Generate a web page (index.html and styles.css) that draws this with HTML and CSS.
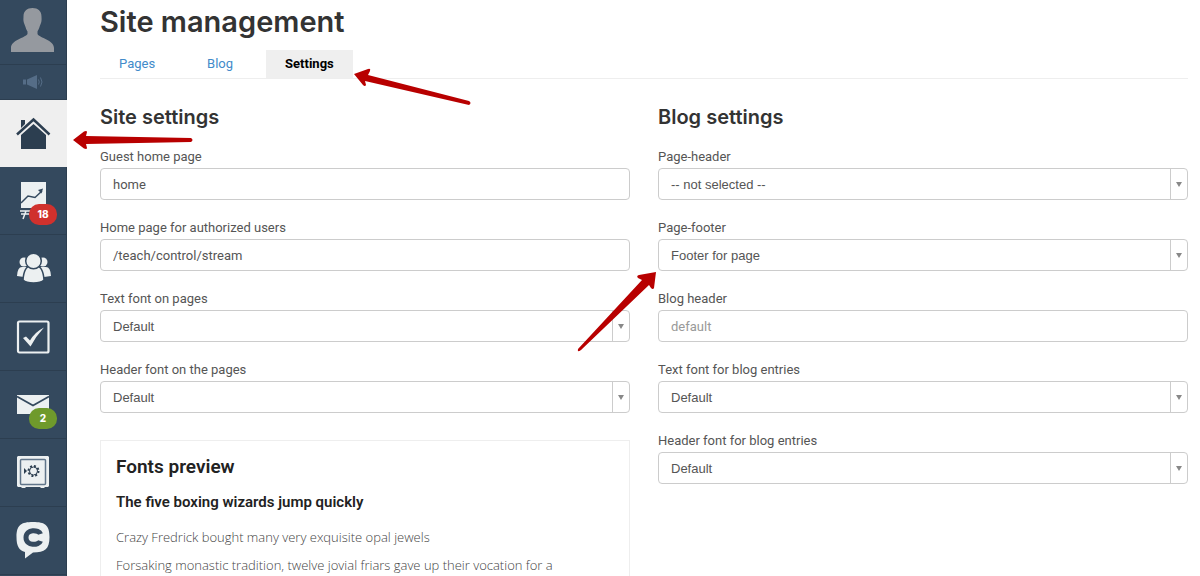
FILE: index.html
```
<!DOCTYPE html>
<html lang="en">
<head>
    <meta charset="UTF-8">
    <meta name="viewport" content="width=device-width, initial-scale=1.0">
    <title>Site management</title>
    <link rel="stylesheet" href="styles.css">
</head>
<body>
    <div class="layout">
        <nav class="sidebar" aria-label="Main menu">
            <a href="#" class="nav-item profile" aria-label="Profile">
                <svg width="46" height="46" viewBox="0 0 46 46">
                    <path fill="#95999f" d="M22.500 1C28 1 31.500 4 31.500 9.500c0 2 .3 3-.2 5.500-.4 2-1.300 3-1.800 5-.4 2-1.500 3-2 4.500v2.500c2 4 16.500 6 16.500 14v4H1v-4c0-8 14-10 16.500-14v-2.500c-.8-1.500-1.500-2.500-2-4.500-.5-2-1.400-3-1.800-5-.5-2.500-.2-3.500-.2-5.500C13.500 4 17 1 22.500 1z"/>
                </svg>
            </a>
            <a href="#" class="nav-item news" aria-label="News">
                <svg width="22" height="16" viewBox="0 0 22 16">
                    <path fill="#556d87" d="M1 5.500h3v5H1zM5 5.500l10-4.500v14L5 10.500z"/>
                    <path fill="none" stroke="#556d87" d="M16.500 5.500q1.500 2.500 0 5M18.500 3.500q3 4.500 0 9"/>
                </svg>
            </a>
            <a href="#" class="nav-item active" aria-label="Site">
                <svg width="36" height="36" viewBox="0 0 36 36">
                    <path fill="#2c3e50" d="M6 20 18.500 9 31 20v14H6zM6 5h4v4l-4 4z"/>
                    <path fill="none" stroke="#2c3e50" stroke-width="2.500" d="M2 19.500 18.500 4.500l16 15"/>
                </svg>
                <svg class="arrow arrow-site" width="122" height="20" viewBox="0 0 122 20">
                    <path d="M1 10 12 1.500q3-1 3 .500l-1 4L119 8q3 2 0 4L14 14l1 4q0 1.500-3 .500z"/>
                </svg>
            </a>
            <a href="#" class="nav-item" aria-label="Training">
                <svg width="36" height="40" viewBox="0 0 36 40">
                    <path fill="#ecf0f1" d="M6 1h25v26H6z"/>
                    <path fill="none" stroke="#34495e" stroke-width="1.500" d="M6 22 13 15l7 1.500 7-6.500"/>
                    <path fill="#34495e" d="m23 9 5-1.500-1.500 5z"/>
                    <path fill="none" stroke="#ecf0f1" stroke-width="1.500" d="M5 30h14M6 33h8M11 30 8 38"/>
                </svg>
                <span class="badge badge-red">18</span>
            </a>
            <a href="#" class="nav-item" aria-label="Users">
                <svg width="36" height="32" viewBox="0 0 36 32">
                    <g fill="#ecf0f1">
                        <circle cx="9" cy="9" r="4.500"/>
                        <circle cx="28" cy="9" r="4.500"/>
                        <path d="M2 23q.5-9 5-9h6v10H9zM36 23q-.5-9-5-9h-6v10h4z"/>
                    </g>
                    <g fill="#ecf0f1" stroke="#34495e" stroke-width="1.500">
                        <path d="M8 27q1-14 8-14h5q7 0 8 14-3 3-10.500 3T8 27z"/>
                        <circle cx="18.500" cy="8" r="7.800"/>
                    </g>
                </svg>
            </a>
            <a href="#" class="nav-item" aria-label="Tasks">
                <svg width="34" height="34" viewBox="0 0 34 34">
                    <rect x="2" y="1.500" width="30.500" height="31" rx="1.500" fill="none" stroke="#ecf0f1" stroke-width="2.200"/>
                    <path fill="#ecf0f1" d="m7 18 3-1.500 4 4Q19 12 28 7.500 20 16 14.500 26.500z"/>
                </svg>
            </a>
            <a href="#" class="nav-item" aria-label="Messages">
                <svg width="34" height="20" viewBox="0 0 34 20">
                    <path fill="#ecf0f1" d="M1 0h32v19H1z"/>
                    <path fill="none" stroke="#34495e" stroke-width="1.800" d="M1 1.500 17 10.500 33 1.500"/>
                </svg>
                <span class="badge badge-green">2</span>
            </a>
            <a href="#" class="nav-item" aria-label="Sales">
                <svg width="34" height="34" viewBox="0 0 34 34">
                    <path fill="#ecf0f1" d="M2 0h30l1 1v29l-1 1h-3l-1 1h-3l-1-1H10l-1 1H6l-1-1H2l-1-1V1z"/>
                    <rect x="4.500" y="3.500" width="25" height="25" rx="1" fill="none" stroke="#60758a" stroke-width="1.500"/>
                    <path fill="#2c3e50" d="m8 12 3 3-3 3z"/>
                    <circle cx="17.500" cy="15" r="4" fill="none" stroke="#2c3e50"/>
                    <circle cx="17.500" cy="15" r="5" fill="none" stroke="#2c3e50" stroke-width="2" stroke-dasharray="2 1.900"/>
                </svg>
            </a>
            <a href="#" class="nav-item" aria-label="Chat">
                <svg width="34" height="38" viewBox="0 0 34 38">
                    <path fill="#ecf0f1" d="M17 0C29 0 33.500 3 33.500 15S29 30.500 17 30.500L9 36.500V30C3 28.500 .5 24 .5 15 .5 3 5 0 17 0z"/>
                    <path fill="none" stroke="#34495e" stroke-width="5" d="M24.500 12C23 7.500 10 6.500 10 15.500s13 8 14.500 3.500"/>
                </svg>
            </a>
            <a href="#" class="nav-item" aria-label="More"></a>
        </nav>

        <main class="content">
            <h1>Site management</h1>
            <nav class="tabs" aria-label="Sections">
                <a href="#">Pages</a>
                <a href="#">Blog</a>
                <a href="#" class="current">Settings
                    <svg class="arrow arrow-tab" width="120" height="38" viewBox="0 0 120 38">
                        <path d="M1 6 15 1q3-1 2 2l-2 4L116 33q3 2 0 4L12 13l1 4q-1 2-3 0z"/>
                    </svg>
                </a>
            </nav>

            <form class="columns">
                <section>
                    <h2>Site settings</h2>
                    <div class="field">
                        <label for="guestPage">Guest home page</label>
                        <input type="text" id="guestPage" value="home">
                    </div>
                    <div class="field">
                        <label for="userPage">Home page for authorized users</label>
                        <input type="text" id="userPage" value="/teach/control/stream">
                    </div>
                    <div class="field">
                        <label for="textFont">Text font on pages</label>
                        <div class="select">
                            <select id="textFont"><option>Default</option></select>
                        </div>
                    </div>
                    <div class="field">
                        <label for="headerFont">Header font on the pages</label>
                        <div class="select">
                            <select id="headerFont"><option>Default</option></select>
                        </div>
                    </div>
                    <div class="preview">
                        <h3>Fonts preview</h3>
                        <h4>The five boxing wizards jump quickly</h4>
                        <p>Crazy Fredrick bought many very exquisite opal jewels</p>
                        <p>Forsaking monastic tradition, twelve jovial friars gave up their vocation for a</p>
                    </div>
                </section>

                <section>
                    <h2>Blog settings</h2>
                    <div class="field">
                        <label for="pageHeader">Page-header</label>
                        <div class="select">
                            <select id="pageHeader"><option>-- not selected --</option></select>
                        </div>
                    </div>
                    <div class="field">
                        <label for="pageFooter">Page-footer</label>
                        <div class="select">
                            <select id="pageFooter"><option>Footer for page</option></select>
                            <svg class="arrow arrow-footer" width="82" height="82" viewBox="0 0 82 82">
                                <path d="M80 1 78 17q-1 2-3 0l-2-3L5 79q-4 3-3-1L66 9l-4-2q-2-2 1-3z"/>
                            </svg>
                        </div>
                    </div>
                    <div class="field">
                        <label for="blogHeader">Blog header</label>
                        <input type="text" id="blogHeader" placeholder="default">
                    </div>
                    <div class="field">
                        <label for="blogTextFont">Text font for blog entries</label>
                        <div class="select">
                            <select id="blogTextFont"><option>Default</option></select>
                        </div>
                    </div>
                    <div class="field">
                        <label for="blogHeaderFont">Header font for blog entries</label>
                        <div class="select">
                            <select id="blogHeaderFont"><option>Default</option></select>
                        </div>
                    </div>
                </section>
            </form>
        </main>
    </div>
</body>
</html>
```
FILE: styles.css
```
* {
    box-sizing: border-box;
}
body {
    margin: 0;
    background: white;
    color: #555;
    font-family: Roboto, sans-serif;
    font-size: 13px;
}
h1, h2, h3, h4, p {
    margin: 0;
}
a {
    text-decoration: none;
}
.layout {
    display: flex;
    height: 100vh;
    overflow: hidden;
}

/* sidebar */
.sidebar {
    flex: none;
    width: 67px;
    background: #34495e;
}
.nav-item {
    position: relative;
    display: flex;
    align-items: center;
    justify-content: center;
    height: 68px;
    border-bottom: 1px solid #2c3e50;
    border-right: 1px solid #2c3e50;
}
.nav-item.profile {
    height: 65px;
    padding-bottom: 4px;
}
.nav-item.news {
    height: 35px;
}
.nav-item.active {
    height: 67px;
    background: #efefef;
    border-color: #efefef;
}
.badge {
    position: absolute;
    top: 37px;
    left: 29px;
    width: 28px;
    border-radius: 10px;
    color: white;
    font-family: Inter, sans-serif;
    font-size: 10px;
    font-weight: 800;
    line-height: 21px;
    text-align: center;
}
.badge-red {
    background: #d0312d;
}
.badge-green {
    background: #6f9a2c;
}

/* pointers */
.arrow {
    position: absolute;
    z-index: 1;
    fill: #b80000;
    pointer-events: none;
}
.arrow-site {
    top: 30px;
    left: 72px;
}
.arrow-tab {
    top: 18px;
    left: 100%;
}
.arrow-footer {
    top: 32px;
    right: 100%;
}

/* content */
.content {
    flex: 1;
    min-width: 0;
    padding: 4px 12px 0 33px;
}
h1, h2 {
    color: #333;
    font-family: Inter, sans-serif;
    font-weight: 600;
}
h1 {
    font-size: 29px;
    line-height: 36px;
}
.tabs {
    display: flex;
    margin-top: 10px;
    border-bottom: 1px solid #eee;
}
.tabs a {
    position: relative;
    padding: 0 19px;
    margin-right: 14px;
    color: #428bca;
    line-height: 28px;
}
.tabs .current {
    background: #efefef;
    color: black;
    font-weight: 700;
}
.columns {
    display: grid;
    grid-template-columns: 1fr 1fr;
    gap: 28px;
    margin-top: 26px;
}
h2 {
    margin-bottom: 19px;
    font-size: 20px;
    line-height: 24px;
}
.field {
    margin-bottom: 19px;
}
.field label {
    display: block;
    margin-bottom: 2px;
    line-height: 18px;
}
.field input, .field select {
    display: block;
    width: 100%;
    height: 32px;
    padding: 0 12px;
    border: 1px solid #ccc;
    border-radius: 4px;
    background: white;
    color: #555;
    font-family: inherit;
    font-size: 13px;
}
.field input::placeholder {
    color: #999;
}
.select {
    position: relative;
}
.field select {
    appearance: none;
    font-family: "Liberation Sans", Arial, sans-serif;
}
.select::before {
    content: "";
    position: absolute;
    top: 1px;
    bottom: 1px;
    right: 17px;
    border-left: 1px solid #ccc;
}
.select::after {
    content: "";
    position: absolute;
    top: 14px;
    right: 6px;
    border: 3px solid transparent;
    border-top: 5px solid #888;
    border-bottom: 0;
}
.preview {
    margin-top: 27px;
    padding: 14px 15px 30px;
    border: 1px solid #eee;
    color: #444;
    font-family: "Open Sans", sans-serif;
    font-weight: 300;
}
.preview h3, .preview h4 {
    color: #222;
    font-family: Roboto, sans-serif;
    font-weight: 600;
}
.preview h3 {
    margin-bottom: 12px;
    font-size: 19px;
    line-height: 24px;
}
.preview h4 {
    margin-bottom: 14px;
    font-size: 15px;
    line-height: 22px;
}
.preview p {
    margin-bottom: 8px;
    line-height: 20px;
}
```
